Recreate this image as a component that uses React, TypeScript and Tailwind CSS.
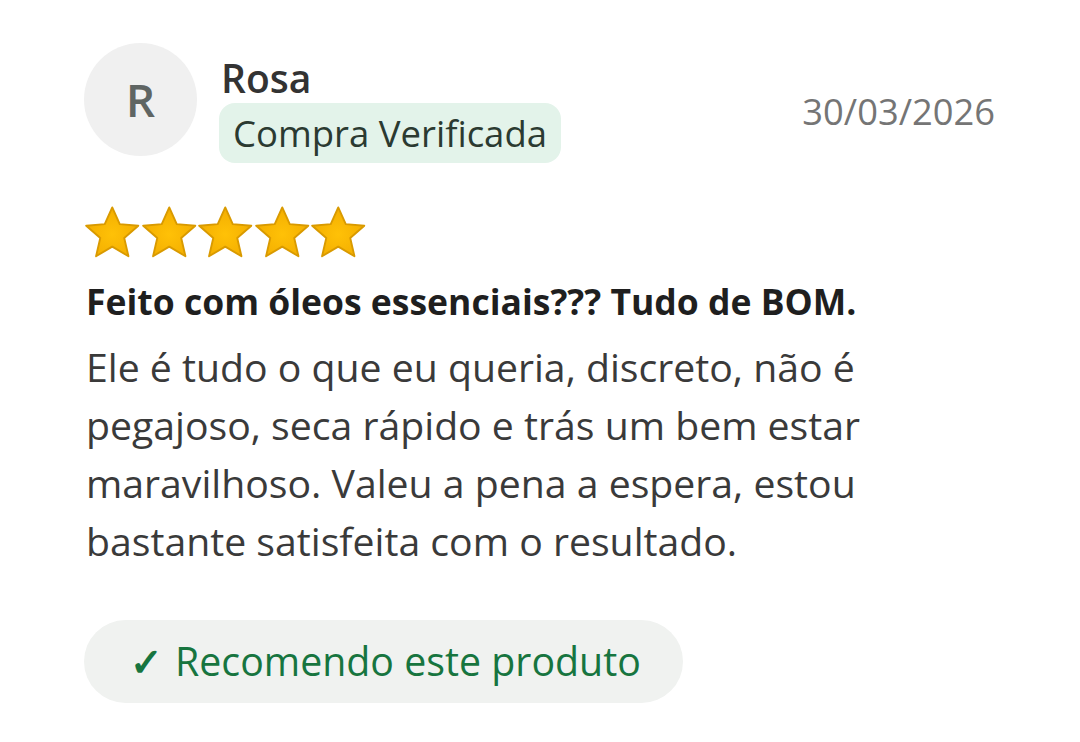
import React from "react";

const Star = () => (
  <svg width="56.5" height="54" viewBox="0 0 24 23">
    <defs>
      <radialGradient id="sg" cx="50%" cy="55%" r="60%">
        <stop offset="0%" stopColor="#ffc107" />
        <stop offset="100%" stopColor="#f2ac00" />
      </radialGradient>
    </defs>
    <path
      d="M12 0.6l3.2 7.1 7.9.7-6 5.2 1.8 7.8L12 17.3l-6.9 4.1 1.8-7.8-6-5.2 7.9-.7z"
      fill="url(#sg)"
      stroke="#d99a00"
      strokeWidth="0.8"
      strokeLinejoin="round"
    />
  </svg>
);

export default function App() {
  return (
    <div
      className="w-[1080px] h-[742px] bg-white pl-[84px] pr-[85px] pt-[43px]"
      style={{ fontFamily: '"Open Sans", "Noto Sans", sans-serif' }}
    >
      <div className="flex items-start">
        <div className="w-[113px] h-[113px] rounded-full bg-[#f0f0f0] flex items-center justify-center text-[46px] font-semibold text-[#5f6563] shrink-0">
          R
        </div>
        <div className="ml-[22px] flex flex-col items-start">
          <div className="text-[39px] font-semibold text-[#333] leading-[40px] mt-[14.5px] ml-[2px]">Rosa</div>
          <div className="mt-[5.5px] h-[60px] px-[14px] rounded-[16px] bg-[#e3f3ea] flex items-center text-[36.5px] text-[#2b3a31] leading-none">
            Compra Verificada
          </div>
        </div>
        <div className="ml-auto mt-[50px] text-[36.3px] text-[#757575] leading-none">30/03/2026</div>
      </div>
      <div className="flex mt-[43px]">
        <Star />
        <Star />
        <Star />
        <Star />
        <Star />
      </div>
      <div className="mt-[21px] ml-[2px] text-[35.5px] font-bold text-[#1f1f1f] leading-[40px] whitespace-nowrap">
        Feito com óleos essenciais??? Tudo de BOM.
      </div>
      <div className="mt-[17px] ml-[2px] text-[39.2px] text-[#3a3a3a] leading-[58px] w-[820px]">
        Ele é tudo o que eu queria, discreto, não é pegajoso, seca rápido e trás um bem estar maravilhoso. Valeu a pena a espera, estou bastante satisfeita com o resultado.
      </div>
      <div className="mt-[50px] inline-flex items-center h-[83px] w-[599px] rounded-full bg-[#f0f2f0] pl-[46px] text-[39.3px] text-[#17753f] leading-none">
        <span className="font-bold mr-[12px]">✓</span>Recomendo este produto
      </div>
    </div>
  );
}
